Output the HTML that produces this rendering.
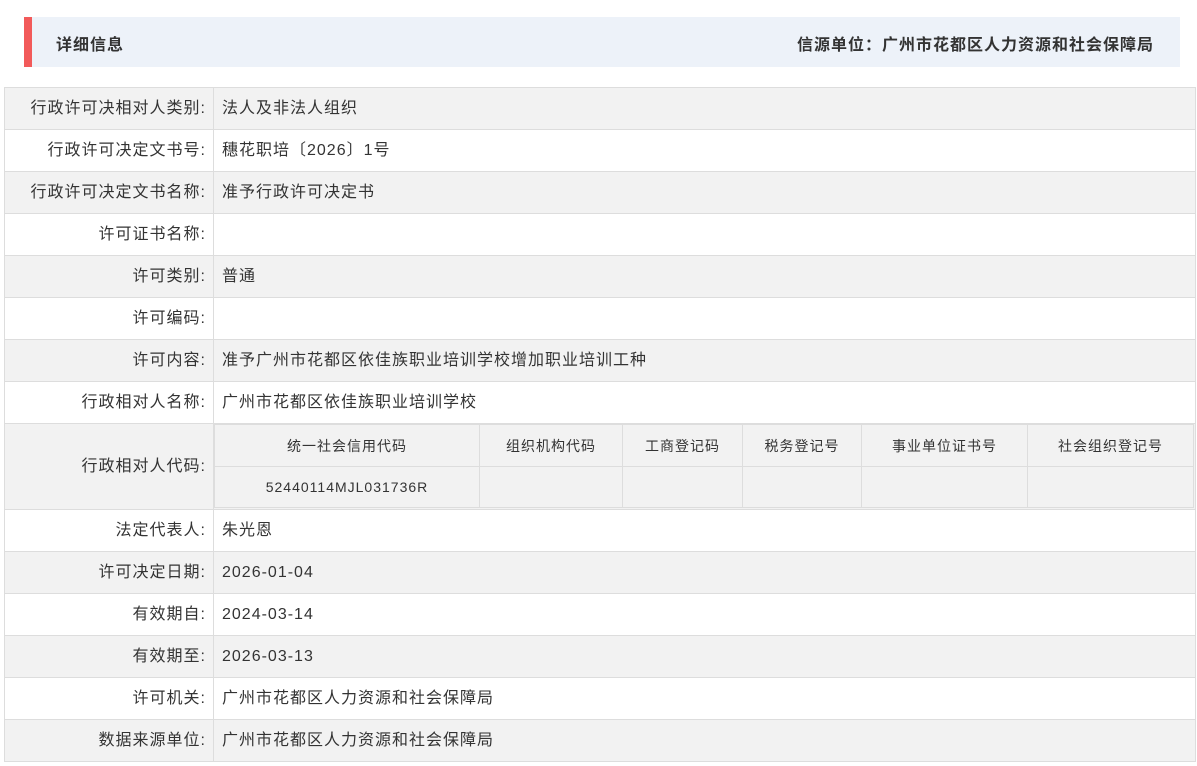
<!DOCTYPE html><html><head><meta charset="utf-8"><style>
body{margin:0;background:#fff;font-family:"Liberation Sans","Noto Sans CJK SC",sans-serif;font-size:16px;letter-spacing:1px;color:#333;width:1197px;height:766px;overflow:hidden;position:relative}
.hd{position:absolute;left:24px;top:17px;width:1156px;height:50px;background:#edf2f9;border-left:8px solid #f25a5a;box-sizing:border-box}
.hd .t{position:absolute;left:24px;top:14px;font-size:16px;font-weight:bold;color:#333}
.hd .r{position:absolute;right:26px;top:14px;font-size:16px;font-weight:bold;color:#333}
table.m{position:absolute;left:4px;top:87px;width:1192px;border-collapse:collapse}
table.m>tbody>tr>td{border:1px solid #ddd;height:42px;padding:0;box-sizing:border-box;line-height:20px}
table.m td.l{width:209px;text-align:right;padding-right:7px}
table.m td.v{padding-left:8px}
tr.g{background:#f2f2f2}
table.i{border-collapse:collapse;width:100%;background:#f2f2f2}
table.i td{border:1px solid #ddd;height:41px;text-align:center;font-size:14px;box-sizing:border-box}
</style></head><body>
<div class="hd"><span class="t">详细信息</span><span class="r">信源单位：广州市花都区人力资源和社会保障局</span></div>
<table class="m"><tbody>
<tr class="g"><td class="l">行政许可决相对人类别:</td><td class="v">法人及非法人组织</td></tr>
<tr><td class="l">行政许可决定文书号:</td><td class="v">穗花职培〔2026〕1号</td></tr>
<tr class="g"><td class="l">行政许可决定文书名称:</td><td class="v">准予行政许可决定书</td></tr>
<tr><td class="l">许可证书名称:</td><td class="v"></td></tr>
<tr class="g"><td class="l">许可类别:</td><td class="v">普通</td></tr>
<tr><td class="l">许可编码:</td><td class="v"></td></tr>
<tr class="g"><td class="l">许可内容:</td><td class="v">准予广州市花都区依佳族职业培训学校增加职业培训工种</td></tr>
<tr><td class="l">行政相对人名称:</td><td class="v">广州市花都区依佳族职业培训学校</td></tr>
<tr class="g"><td class="l" style="height:84px">行政相对人代码:</td><td style="padding:0 1px 1px 0;vertical-align:top"><table class="i"><tr><td style="width:265px;height:42px">统一社会信用代码</td><td style="width:143px">组织机构代码</td><td style="width:120px">工商登记码</td><td style="width:119px">税务登记号</td><td style="width:166px">事业单位证书号</td><td>社会组织登记号</td></tr><tr><td style="height:40px">52440114MJL031736R</td><td></td><td></td><td></td><td></td><td></td></tr></table></td></tr>
<tr><td class="l">法定代表人:</td><td class="v">朱光恩</td></tr>
<tr class="g"><td class="l">许可决定日期:</td><td class="v">2026-01-04</td></tr>
<tr><td class="l">有效期自:</td><td class="v">2024-03-14</td></tr>
<tr class="g"><td class="l">有效期至:</td><td class="v">2026-03-13</td></tr>
<tr><td class="l">许可机关:</td><td class="v">广州市花都区人力资源和社会保障局</td></tr>
<tr class="g"><td class="l">数据来源单位:</td><td class="v">广州市花都区人力资源和社会保障局</td></tr>
</tbody></table>
</body></html>
